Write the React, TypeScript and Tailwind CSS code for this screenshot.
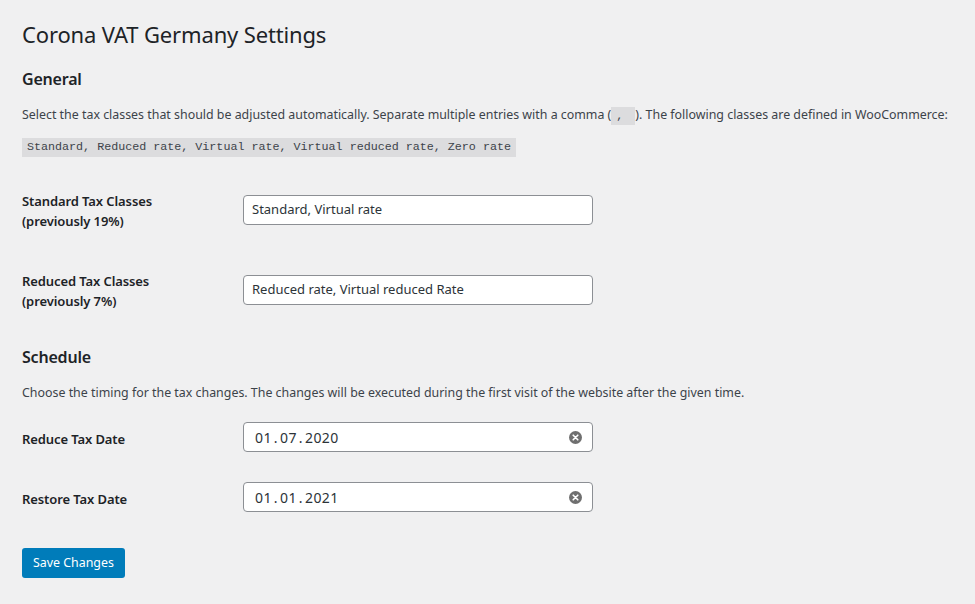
const font = 'font-["Noto_Sans","Segoe_UI",sans-serif]'

const ClearIcon = () => (
  <svg width="13" height="13" viewBox="0 0 13 13" className="shrink-0">
    <circle cx="6.5" cy="6.5" r="6.5" fill="#6f6f6f" />
    <path d="M4.2 4.2 L8.8 8.8 M8.8 4.2 L4.2 8.8" stroke="#ffffff" strokeWidth="1.6" strokeLinecap="round" />
  </svg>
)

const TextRow = ({ label, sub, value }: { label: string; sub: string; value: string }) => (
  <div className="flex h-[80px]">
    <div className="w-[221px] shrink-0 pt-[20px] text-[13px] leading-[20px] font-semibold tracking-[-0.1px] text-[#1d2327]">
      <div>{label}</div>
      <div>{sub}</div>
    </div>
    <div className="pt-[24px]">
      <div className="flex h-[30px] w-[350px] items-center rounded-[4px] border border-[#8c8f94] bg-white px-[8px] text-[13px] text-[#2c3338]">
        {value}
      </div>
    </div>
  </div>
)

const DateRow = ({ label, value }: { label: string; value: string }) => (
  <div className="flex h-[60px]">
    <div className="w-[221px] shrink-0 pt-[26px] text-[13px] leading-[20px] font-semibold tracking-[-0.1px] text-[#1d2327]">
      {label}
    </div>
    <div className="pt-[19px]">
      <div className="flex h-[30px] w-[350px] items-center justify-between rounded-[4px] border border-[#8c8f94] bg-white pl-[11px] pr-[10px] text-[14px] text-[#2c3338]">
        <span className="tracking-[0.4px]">
          {value.split('.').map((part, i) => (
            <span key={i}>
              {i > 0 && <span className="px-[2px]">.</span>}
              {part}
            </span>
          ))}
        </span>
        <ClearIcon />
      </div>
    </div>
  </div>
)

export default function App() {
  return (
    <div className={`min-h-[604px] bg-[#f0f0f1] pl-[22px] text-[#3c434a] ${font}`}>
      <h1 className="pt-[20px] text-[22px] leading-[29px] font-normal tracking-[-0.15px] text-[#1d2327]">
        Corona VAT Germany Settings
      </h1>

      <h2 className="mt-[19px] text-[16px] leading-[22px] font-semibold tracking-[-0.2px] text-[#1d2327]">General</h2>
      <p className="mt-[15px] whitespace-nowrap text-[12.4px] leading-[20px]">
        Select the tax classes that should be adjusted automatically. Separate multiple entries with a comma (
        <code className="bg-[#dcdcde] px-[5px] py-[2px] font-['Liberation_Mono',monospace] text-[11.7px] whitespace-pre">, </code>
        ). The following classes are defined in WooCommerce:
      </p>
      <div className="mt-[12px] flex">
        <code className="flex h-[19px] items-center bg-[#dcdcde] px-[5px] font-['Liberation_Mono',monospace] text-[11.7px] text-[#3c434a]">
          Standard, Reduced rate, Virtual rate, Virtual reduced rate, Zero rate
        </code>
      </div>

      <div className="mt-[14px]">
        <TextRow label="Standard Tax Classes" sub="(previously 19%)" value="Standard, Virtual rate" />
        <TextRow label="Reduced Tax Classes" sub="(previously 7%)" value="Reduced rate, Virtual reduced Rate" />
      </div>

      <h2 className="mt-[15px] text-[16px] leading-[22px] font-semibold tracking-[-0.2px] text-[#1d2327]">Schedule</h2>
      <p className="mt-[15px] text-[12.4px] leading-[20px]">
        Choose the timing for the tax changes. The changes will be executed during the first visit of the website after the given time.
      </p>

      <DateRow label="Reduce Tax Date" value="01.07.2020" />
      <DateRow label="Restore Tax Date" value="01.01.2021" />

      <button className="mt-[25px] h-[30px] rounded-[3px] bg-[#007cba] px-[11px] text-[12.4px] text-white">
        Save Changes
      </button>
    </div>
  )
}
